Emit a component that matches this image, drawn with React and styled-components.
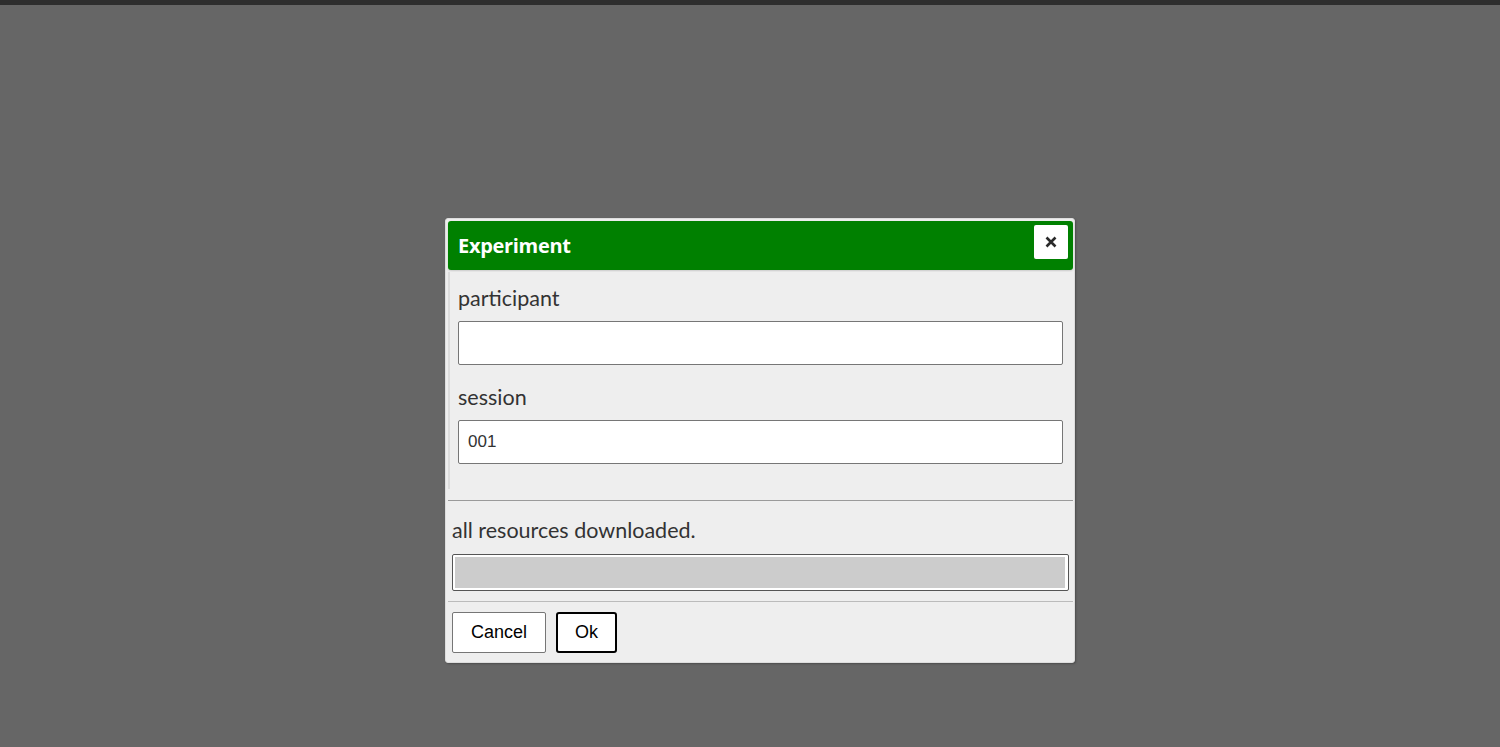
import React from "react";
import styled, { createGlobalStyle } from "styled-components";

const Global = createGlobalStyle`
  html, body { margin: 0; padding: 0; height: 100%; }
  body { background: #666666; font-family: "Lato", "Open Sans", sans-serif; overflow: hidden; }
  #root { height: 100%; }
`;

const Page = styled.div`
  height: 747px;
  display: flex;
  flex-direction: column;
`;

const TopBar = styled.div`
  height: 5px;
  background: #2e2e2e;
  flex-shrink: 0;
`;

const Overlay = styled.div`
  flex: 1;
  display: flex;
  justify-content: center;
  align-items: flex-start;
  padding: 213px 0 0 20px;
`;

const Dialog = styled.div`
  width: 625px;
  padding: 2px 1px 2px 2px;
  border: 1px solid #dddddd;
  border-radius: 3px;
  background: #eeeeee;
  box-shadow: 1px 1px 2px rgba(0, 0, 0, 0.25);
  display: flex;
  flex-direction: column;
`;

const TitleBar = styled.div`
  height: 49px;
  box-sizing: border-box;
  background: #008000;
  border-radius: 3px;
  display: flex;
  align-items: flex-start;
  justify-content: space-between;
  padding: 4px 5px 0 10px;
  box-shadow: 0 1px 2px rgba(0, 0, 0, 0.15);
`;

const Title = styled.span`
  color: #ffffff;
  font-family: "Open Sans", "Noto Sans", sans-serif;
  font-weight: 700;
  font-size: 20px;
  line-height: 42px;
  letter-spacing: -0.3px;
`;

const CloseButton = styled.button`
  width: 34px;
  height: 34px;
  border: none;
  border-radius: 2px;
  background: #ffffff;
  display: flex;
  align-items: center;
  justify-content: center;
  padding: 0;
  cursor: pointer;
`;

const Content = styled.div`
  margin: 2px 1px 0 0;
  border-left: 2px solid #dcdcdc;
  background: #eeeeee;
  padding: 14px 9px 25px 8px;
  display: flex;
  flex-direction: column;
`;

const Label = styled.label`
  font-size: 21.5px;
  color: #333333;
  line-height: 25px;
  margin-bottom: 10px;
  margin-top: ${p => (p.$first ? "0" : "20px")};
`;

const TextInput = styled.input`
  box-sizing: border-box;
  width: 100%;
  height: 44px;
  border: 1px solid #767676;
  border-radius: 2px;
  background: #ffffff;
  font-family: "Liberation Sans", Arial, sans-serif;
  font-size: 17px;
  color: #333333;
  padding: 0 9px;
  outline: none;
`;

const Separator = styled.hr`
  border: none;
  height: 1px;
  background: ${p => p.$color};
  margin: ${p => p.$margin};
`;

const Status = styled.div`
  font-size: 21.5px;
  color: #333333;
  line-height: 25px;
  padding: 17px 0 0 4px;
`;

const Progress = styled.div`
  margin: 11px 4px 0 4px;
  height: 37px;
  box-sizing: border-box;
  border: 1px solid #555555;
  border-radius: 2px;
  background: #ffffff;
  padding: 2px 3px 2px 2px;
`;

const ProgressFill = styled.div`
  height: 100%;
  background: #cccccc;
`;

const ButtonRow = styled.div`
  display: flex;
  gap: 10px;
  padding: 10px 4px 7px 4px;
`;

const Button = styled.button`
  height: 41px;
  box-sizing: border-box;
  padding: 0 16px;
  background: #ffffff;
  border: ${p => (p.$focused ? "2px solid #000000" : "1px solid #767676")};
  border-radius: ${p => (p.$focused ? "3px" : "2px")};
  font-family: "Liberation Sans", Arial, sans-serif;
  font-size: 18px;
  color: #000000;
  cursor: pointer;
  min-width: ${p => p.$w}px;
`;

export default function App() {
  return (
    <>
      <Global />
      <Page>
        <TopBar />
        <Overlay>
          <Dialog>
            <TitleBar>
              <Title>Experiment</Title>
              <CloseButton aria-label="close">
                <svg width="12" height="12" viewBox="0 0 12 12">
                  <path d="M1.5 1.5 L10.5 10.5 M10.5 1.5 L1.5 10.5" stroke="#2a2a2a" strokeWidth="2.6" strokeLinecap="butt" />
                </svg>
              </CloseButton>
            </TitleBar>
            <Content>
              <Label $first>participant</Label>
              <TextInput defaultValue="" />
              <Label>session</Label>
              <TextInput defaultValue="001" />
            </Content>
            <Separator $color="#9a9a9a" $margin="11px 0 0 0" />
            <Status>all resources downloaded.</Status>
            <Progress>
              <ProgressFill />
            </Progress>
            <Separator $color="#bbbbbb" $margin="10px 0 0 0" />
            <ButtonRow>
              <Button $w={94}>Cancel</Button>
              <Button $w={61} $focused>Ok</Button>
            </ButtonRow>
          </Dialog>
        </Overlay>
      </Page>
    </>
  );
}
